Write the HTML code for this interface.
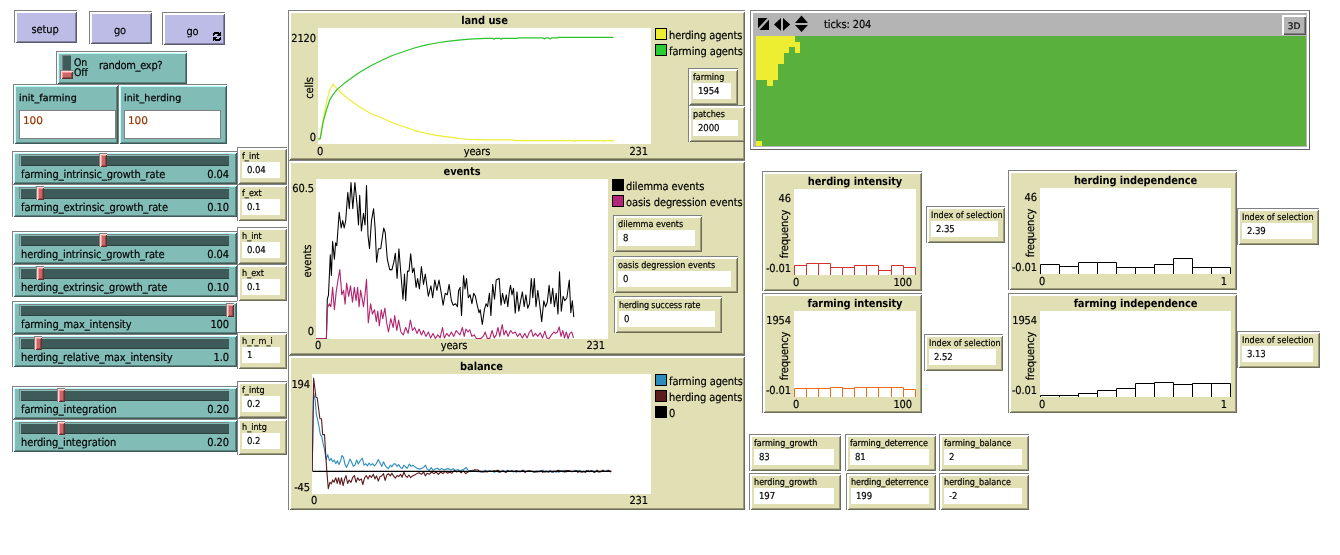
<!DOCTYPE html>
<html><head><meta charset="utf-8"><title>NetLogo interface</title><style>
html,body{margin:0;padding:0;background:#fff;}
body{width:1340px;height:555px;position:relative;overflow:hidden;-webkit-font-smoothing:antialiased;text-rendering:geometricPrecision;letter-spacing:-0.1px;-webkit-text-stroke:0.18px #000;font:11px/13px 'DejaVu Sans Condensed', 'Liberation Sans', sans-serif;color:#000;}
.w{position:absolute;box-sizing:border-box;border-top:1px solid #808080;border-left:1px solid #808080;overflow:hidden;}
.a{position:absolute;white-space:nowrap;}
#root{position:absolute;left:0;top:0;width:1340px;height:555px;will-change:transform;}
.bl{position:absolute;left:0;right:0;top:0;text-align:center;font:11px 'DejaVu Sans Condensed', 'Liberation Sans', sans-serif;}
.hd{background:#c86767;box-sizing:border-box;border-top:1px solid #808080;border-left:1px solid #808080;box-shadow:inset 1px 1px 0 #ffd6d6,inset -1px -1px 0 #643232,inset 2px 2px 0 #ff9494,inset -2px -2px 0 #8e4848;}
.trk{background:#3f5b59;box-sizing:border-box;border-top:1px solid #808080;border-left:1px solid #808080;box-shadow:inset 1px 1px 0 #82bcb7,inset 0 -1px 0 #2c403e;}
.ml{font:9px/12px 'DejaVu Sans Condensed', 'Liberation Sans', sans-serif;}
.mv{font:9.5px/12px 'DejaVu Sans Condensed', 'Liberation Sans', sans-serif;}
.pt{font:bold 11px/14px 'DejaVu Sans Condensed', 'Liberation Sans', sans-serif;text-align:center;-webkit-text-stroke:0;}
.pl{font:11px/13px 'DejaVu Sans Condensed', 'Liberation Sans', sans-serif;margin-top:-1px;}
.rot{transform:translate(-50%,-50%) rotate(-90deg);margin-top:0;}
</style></head><body>
<div id="root">
<div class="w" style="left:14px;top:10px;width:63px;height:33px;background:rgb(188,188,230);box-shadow:inset 1px 1px 0 rgb(255,255,255),inset -1px -1px 0 rgb(91,91,112),inset 2px 2px 0 rgb(255,255,255),inset -2px -2px 0 rgb(131,131,161);"><span class="bl" style="line-height:37px;padding-right:2px;">setup</span></div>
<div class="w" style="left:89px;top:11px;width:63px;height:33px;background:rgb(188,188,230);box-shadow:inset 1px 1px 0 rgb(255,255,255),inset -1px -1px 0 rgb(91,91,112),inset 2px 2px 0 rgb(255,255,255),inset -2px -2px 0 rgb(131,131,161);"><span class="bl" style="line-height:37px;padding-right:2px;">go</span></div>
<div class="w" style="left:162px;top:12px;width:63px;height:33px;background:rgb(188,188,230);box-shadow:inset 1px 1px 0 rgb(255,255,255),inset -1px -1px 0 rgb(91,91,112),inset 2px 2px 0 rgb(255,255,255),inset -2px -2px 0 rgb(131,131,161);"><span class="bl" style="line-height:37px;padding-right:3px;">go</span><svg class="a" style="left:50px;top:19px" width="8" height="9" shape-rendering="crispEdges"><rect x="1" y="0" width="5" height="1"/><rect x="7" y="0" width="1" height="1"/><rect x="0" y="1" width="8" height="1"/><rect x="0" y="2" width="2" height="1"/><rect x="5" y="2" width="3" height="1"/><rect x="0" y="3" width="1" height="1"/><rect x="4" y="3" width="4" height="1"/><rect x="0" y="5" width="4" height="1"/><rect x="7" y="5" width="1" height="1"/><rect x="0" y="6" width="3" height="1"/><rect x="6" y="6" width="2" height="1"/><rect x="0" y="7" width="8" height="1"/><rect x="0" y="8" width="1" height="1"/><rect x="2" y="8" width="5" height="1"/></svg></div>
<div class="w" style="left:56px;top:51px;width:131px;height:33px;background:rgb(130,188,183);box-shadow:inset 1px 1px 0 rgb(255,255,255),inset -1px -1px 0 rgb(63,91,89),inset 2px 2px 0 rgb(185,255,255),inset -2px -2px 0 rgb(91,131,128);"><div class="a" style="left:5px;top:3px;width:9px;height:18px;background:rgb(63,91,89);border-top:1px solid #808080;border-left:1px solid #808080;box-sizing:border-box"></div><div class="a hd" style="left:3px;top:18px;width:13px;height:9px"></div><span class="a" style="left:17px;top:6px;font:10.5px/10px 'DejaVu Sans Condensed', 'Liberation Sans', sans-serif">On</span><span class="a" style="left:17px;top:16px;font:10.5px/10px 'DejaVu Sans Condensed', 'Liberation Sans', sans-serif">Off</span><span class="a" style="left:42px;top:7px;font:11px/13px 'DejaVu Sans Condensed', 'Liberation Sans', sans-serif;letter-spacing:-0.3px">random_exp?</span></div>
<div class="w" style="left:13px;top:84px;width:105px;height:60px;background:rgb(130,188,183);box-shadow:inset 1px 1px 0 rgb(255,255,255),inset -1px -1px 0 rgb(63,91,89),inset 2px 2px 0 rgb(185,255,255),inset -2px -2px 0 rgb(91,131,128);"><span class="a" style="left:5px;top:8px;font:9.5px/12px 'DejaVu Sans', 'Liberation Sans', sans-serif;letter-spacing:0.1px;-webkit-text-stroke:0.25px #000">init_farming</span><div class="a" style="left:5px;top:25px;width:97px;height:29px;background:#fff;border:1px solid #808080;box-sizing:border-box"></div><span class="a" style="left:9px;top:30px;font:10.5px/12px 'DejaVu Sans', 'Liberation Sans', sans-serif;color:#963700;-webkit-text-stroke:0.2px #963700">100</span></div>
<div class="w" style="left:118px;top:84px;width:109px;height:60px;background:rgb(130,188,183);box-shadow:inset 1px 1px 0 rgb(255,255,255),inset -1px -1px 0 rgb(63,91,89),inset 2px 2px 0 rgb(185,255,255),inset -2px -2px 0 rgb(91,131,128);"><span class="a" style="left:5px;top:8px;font:9.5px/12px 'DejaVu Sans', 'Liberation Sans', sans-serif;letter-spacing:0.1px;-webkit-text-stroke:0.25px #000">init_herding</span><div class="a" style="left:5px;top:25px;width:97px;height:29px;background:#fff;border:1px solid #808080;box-sizing:border-box"></div><span class="a" style="left:9px;top:30px;font:10.5px/12px 'DejaVu Sans', 'Liberation Sans', sans-serif;color:#963700;-webkit-text-stroke:0.2px #963700">100</span></div>
<div class="w" style="left:12px;top:151px;width:225px;height:33px;background:rgb(130,188,183);box-shadow:inset 1px 1px 0 rgb(255,255,255),inset -1px -1px 0 rgb(63,91,89),inset 2px 2px 0 rgb(185,255,255),inset -2px -2px 0 rgb(91,131,128);"><div class="a trk" style="left:6px;top:2px;width:210px;height:12px"></div><div class="a hd" style="left:86px;top:1px;width:8px;height:14px"></div><span class="a" style="left:8px;top:16px;font:11px/13px 'DejaVu Sans Condensed', 'Liberation Sans', sans-serif">farming_intrinsic_growth_rate</span><span class="a" style="right:8px;top:16px;font:11px/13px 'DejaVu Sans Condensed', 'Liberation Sans', sans-serif">0.04</span></div>
<div class="w" style="left:12px;top:184px;width:225px;height:33px;background:rgb(130,188,183);box-shadow:inset 1px 1px 0 rgb(255,255,255),inset -1px -1px 0 rgb(63,91,89),inset 2px 2px 0 rgb(185,255,255),inset -2px -2px 0 rgb(91,131,128);"><div class="a trk" style="left:6px;top:2px;width:210px;height:12px"></div><div class="a hd" style="left:23px;top:1px;width:8px;height:14px"></div><span class="a" style="left:8px;top:16px;font:11px/13px 'DejaVu Sans Condensed', 'Liberation Sans', sans-serif">farming_extrinsic_growth_rate</span><span class="a" style="right:8px;top:16px;font:11px/13px 'DejaVu Sans Condensed', 'Liberation Sans', sans-serif">0.10</span></div>
<div class="w" style="left:12px;top:231px;width:225px;height:33px;background:rgb(130,188,183);box-shadow:inset 1px 1px 0 rgb(255,255,255),inset -1px -1px 0 rgb(63,91,89),inset 2px 2px 0 rgb(185,255,255),inset -2px -2px 0 rgb(91,131,128);"><div class="a trk" style="left:6px;top:2px;width:210px;height:12px"></div><div class="a hd" style="left:86px;top:1px;width:8px;height:14px"></div><span class="a" style="left:8px;top:16px;font:11px/13px 'DejaVu Sans Condensed', 'Liberation Sans', sans-serif">herding_intrinsic_growth_rate</span><span class="a" style="right:8px;top:16px;font:11px/13px 'DejaVu Sans Condensed', 'Liberation Sans', sans-serif">0.04</span></div>
<div class="w" style="left:12px;top:264px;width:225px;height:33px;background:rgb(130,188,183);box-shadow:inset 1px 1px 0 rgb(255,255,255),inset -1px -1px 0 rgb(63,91,89),inset 2px 2px 0 rgb(185,255,255),inset -2px -2px 0 rgb(91,131,128);"><div class="a trk" style="left:6px;top:2px;width:210px;height:12px"></div><div class="a hd" style="left:23px;top:1px;width:8px;height:14px"></div><span class="a" style="left:8px;top:16px;font:11px/13px 'DejaVu Sans Condensed', 'Liberation Sans', sans-serif">herding_extrinsic_growth_rate</span><span class="a" style="right:8px;top:16px;font:11px/13px 'DejaVu Sans Condensed', 'Liberation Sans', sans-serif">0.10</span></div>
<div class="w" style="left:12px;top:301px;width:225px;height:33px;background:rgb(130,188,183);box-shadow:inset 1px 1px 0 rgb(255,255,255),inset -1px -1px 0 rgb(63,91,89),inset 2px 2px 0 rgb(185,255,255),inset -2px -2px 0 rgb(91,131,128);"><div class="a trk" style="left:6px;top:2px;width:210px;height:12px"></div><div class="a hd" style="left:213px;top:1px;width:8px;height:14px"></div><span class="a" style="left:8px;top:16px;font:11px/13px 'DejaVu Sans Condensed', 'Liberation Sans', sans-serif">farming_max_intensity</span><span class="a" style="right:8px;top:16px;font:11px/13px 'DejaVu Sans Condensed', 'Liberation Sans', sans-serif">100</span></div>
<div class="w" style="left:12px;top:334px;width:225px;height:33px;background:rgb(130,188,183);box-shadow:inset 1px 1px 0 rgb(255,255,255),inset -1px -1px 0 rgb(63,91,89),inset 2px 2px 0 rgb(185,255,255),inset -2px -2px 0 rgb(91,131,128);"><div class="a trk" style="left:6px;top:2px;width:210px;height:12px"></div><div class="a hd" style="left:21px;top:1px;width:8px;height:14px"></div><span class="a" style="left:8px;top:16px;font:11px/13px 'DejaVu Sans Condensed', 'Liberation Sans', sans-serif">herding_relative_max_intensity</span><span class="a" style="right:8px;top:16px;font:11px/13px 'DejaVu Sans Condensed', 'Liberation Sans', sans-serif">1.0</span></div>
<div class="w" style="left:12px;top:386px;width:225px;height:33px;background:rgb(130,188,183);box-shadow:inset 1px 1px 0 rgb(255,255,255),inset -1px -1px 0 rgb(63,91,89),inset 2px 2px 0 rgb(185,255,255),inset -2px -2px 0 rgb(91,131,128);"><div class="a trk" style="left:6px;top:2px;width:210px;height:12px"></div><div class="a hd" style="left:44px;top:1px;width:8px;height:14px"></div><span class="a" style="left:8px;top:16px;font:11px/13px 'DejaVu Sans Condensed', 'Liberation Sans', sans-serif">farming_integration</span><span class="a" style="right:8px;top:16px;font:11px/13px 'DejaVu Sans Condensed', 'Liberation Sans', sans-serif">0.20</span></div>
<div class="w" style="left:12px;top:419px;width:225px;height:33px;background:rgb(130,188,183);box-shadow:inset 1px 1px 0 rgb(255,255,255),inset -1px -1px 0 rgb(63,91,89),inset 2px 2px 0 rgb(185,255,255),inset -2px -2px 0 rgb(91,131,128);"><div class="a trk" style="left:6px;top:2px;width:210px;height:12px"></div><div class="a hd" style="left:44px;top:1px;width:8px;height:14px"></div><span class="a" style="left:8px;top:16px;font:11px/13px 'DejaVu Sans Condensed', 'Liberation Sans', sans-serif">herding_integration</span><span class="a" style="right:8px;top:16px;font:11px/13px 'DejaVu Sans Condensed', 'Liberation Sans', sans-serif">0.20</span></div>
<div class="w" style="left:237px;top:147px;width:50px;height:37px;background:rgb(224,224,180);box-shadow:inset 1px 1px 0 rgb(255,255,255),inset -1px -1px 0 rgb(109,109,87),inset 2px 2px 0 rgb(255,255,255),inset -2px -2px 0 rgb(156,156,125);"><span class="a ml" style="left:4px;top:3px;letter-spacing:0px">f_int</span><div class="a" style="left:4px;top:14px;width:38px;height:16px;background:#fff"></div><span class="a mv" style="left:9px;top:17px">0.04</span></div>
<div class="w" style="left:237px;top:184px;width:50px;height:37px;background:rgb(224,224,180);box-shadow:inset 1px 1px 0 rgb(255,255,255),inset -1px -1px 0 rgb(109,109,87),inset 2px 2px 0 rgb(255,255,255),inset -2px -2px 0 rgb(156,156,125);"><span class="a ml" style="left:4px;top:3px;letter-spacing:0px">f_ext</span><div class="a" style="left:4px;top:14px;width:38px;height:16px;background:#fff"></div><span class="a mv" style="left:9px;top:17px">0.1</span></div>
<div class="w" style="left:237px;top:227px;width:50px;height:37px;background:rgb(224,224,180);box-shadow:inset 1px 1px 0 rgb(255,255,255),inset -1px -1px 0 rgb(109,109,87),inset 2px 2px 0 rgb(255,255,255),inset -2px -2px 0 rgb(156,156,125);"><span class="a ml" style="left:4px;top:3px;letter-spacing:0px">h_int</span><div class="a" style="left:4px;top:14px;width:38px;height:16px;background:#fff"></div><span class="a mv" style="left:9px;top:17px">0.04</span></div>
<div class="w" style="left:237px;top:264px;width:50px;height:37px;background:rgb(224,224,180);box-shadow:inset 1px 1px 0 rgb(255,255,255),inset -1px -1px 0 rgb(109,109,87),inset 2px 2px 0 rgb(255,255,255),inset -2px -2px 0 rgb(156,156,125);"><span class="a ml" style="left:4px;top:3px;letter-spacing:0px">h_ext</span><div class="a" style="left:4px;top:14px;width:38px;height:16px;background:#fff"></div><span class="a mv" style="left:9px;top:17px">0.1</span></div>
<div class="w" style="left:237px;top:332px;width:50px;height:37px;background:rgb(224,224,180);box-shadow:inset 1px 1px 0 rgb(255,255,255),inset -1px -1px 0 rgb(109,109,87),inset 2px 2px 0 rgb(255,255,255),inset -2px -2px 0 rgb(156,156,125);"><span class="a ml" style="left:4px;top:3px;letter-spacing:0px">h_r_m_i</span><div class="a" style="left:4px;top:14px;width:38px;height:16px;background:#fff"></div><span class="a mv" style="left:9px;top:17px">1</span></div>
<div class="w" style="left:237px;top:381px;width:50px;height:37px;background:rgb(224,224,180);box-shadow:inset 1px 1px 0 rgb(255,255,255),inset -1px -1px 0 rgb(109,109,87),inset 2px 2px 0 rgb(255,255,255),inset -2px -2px 0 rgb(156,156,125);"><span class="a ml" style="left:4px;top:3px;letter-spacing:0px">f_intg</span><div class="a" style="left:4px;top:14px;width:38px;height:16px;background:#fff"></div><span class="a mv" style="left:9px;top:17px">0.2</span></div>
<div class="w" style="left:237px;top:418px;width:50px;height:37px;background:rgb(224,224,180);box-shadow:inset 1px 1px 0 rgb(255,255,255),inset -1px -1px 0 rgb(109,109,87),inset 2px 2px 0 rgb(255,255,255),inset -2px -2px 0 rgb(156,156,125);"><span class="a ml" style="left:4px;top:3px;letter-spacing:0px">h_intg</span><div class="a" style="left:4px;top:14px;width:38px;height:16px;background:#fff"></div><span class="a mv" style="left:9px;top:17px">0.2</span></div>
<div class="w" style="left:288px;top:10px;width:457px;height:150px;background:rgb(224,224,180);box-shadow:inset 1px 1px 0 rgb(255,255,255),inset -1px -1px 0 rgb(109,109,87),inset 2px 2px 0 rgb(255,255,255),inset -2px -2px 0 rgb(156,156,125);"><span class="a pt" style="left:29px;top:3px;width:333px">land use</span><div class="a" style="left:29px;top:17px;width:333px;height:116px;background:#fff"><svg class="a" style="left:0;top:0" width="333" height="116" viewBox="0 0 333 116"><polyline fill="none" stroke="#eded31" stroke-width="1.2" stroke-linejoin="round" points="0.4,111.1 2.2,110.6 5.1,91.9 8.4,74.3 11.7,62.2 15.0,56.3 19.4,61.1 23.8,65.5 30.3,71.0 41.3,78.7 52.3,85.3 63.3,89.7 74.3,94.8 85.3,98.5 96.3,102.3 107.3,105.1 118.3,107.3 129.3,108.9 140.3,110.4 151.3,111.5 162.3,111.7 167.4,111.9 168.8,111.8 170.2,111.8 171.7,111.8 173.1,111.8 174.6,111.8 176.0,111.8 177.4,111.8 178.9,111.8 180.3,111.8 181.8,111.8 183.2,111.8 184.6,111.8 186.1,111.8 187.5,111.8 189.0,111.8 190.4,111.8 191.8,111.8 193.3,111.8 194.7,111.8 196.2,112.6 197.6,112.6 199.0,112.6 200.5,112.6 201.9,112.6 203.4,112.6 204.8,112.6 206.2,112.6 207.7,112.6 209.1,112.6 210.6,112.6 212.0,112.6 213.4,112.6 214.9,112.6 216.3,112.6 217.8,112.6 219.2,112.6 220.6,112.6 222.1,112.6 223.5,112.6 225.0,112.6 226.4,112.6 227.8,112.6 229.3,112.6 230.7,112.6 232.2,112.6 233.6,112.6 235.0,112.6 236.5,112.6 237.9,112.6 239.4,112.6 240.8,112.6 242.2,112.6 243.7,112.6 245.1,112.6 246.6,112.6 248.0,112.6 249.4,112.6 250.9,112.6 252.3,112.6 253.8,112.6 255.2,112.6 256.6,113.6 258.1,112.6 259.5,112.6 261.0,112.6 262.4,112.6 263.8,112.6 265.3,112.6 266.7,112.6 268.2,112.6 269.6,112.6 271.0,112.6 272.5,112.6 273.9,112.6 275.4,112.6 276.8,112.6 278.2,112.6 279.7,112.6 281.1,112.6 282.6,112.6 284.0,112.6 285.4,113.6 286.9,112.6 288.3,112.6 289.8,112.6 291.2,112.6 292.6,112.6 294.1,113.6 295.5,112.6 295.6,112.6"/><polyline fill="none" stroke="#2cc42c" stroke-width="1.2" stroke-linejoin="round" points="0.4,111.1 2.2,110.6 5.1,94.1 8.4,82.0 11.7,72.1 15.0,66.6 19.4,61.1 26.0,55.6 30.3,52.3 41.3,44.6 52.3,38.0 63.3,32.5 74.3,27.5 85.3,23.8 96.3,20.0 107.3,17.2 118.3,15.0 129.3,13.4 140.3,12.1 151.3,11.2 162.3,10.6 167.4,10.3 168.8,10.3 170.2,10.3 171.7,10.3 173.1,10.3 174.6,10.3 176.0,11.3 177.4,10.3 178.9,10.3 180.3,10.3 181.8,10.3 183.2,11.3 184.6,10.3 186.1,10.3 187.5,10.3 189.0,10.3 190.4,10.3 191.8,10.3 193.3,10.3 194.7,10.3 196.2,10.3 197.6,10.3 199.0,10.3 200.5,9.9 201.9,9.9 203.4,9.9 204.8,9.9 206.2,9.9 207.7,9.9 209.1,9.9 210.6,9.9 212.0,9.9 213.4,9.9 214.9,9.9 216.3,9.9 217.8,9.9 219.2,9.9 220.6,9.9 222.1,9.9 223.5,9.9 225.0,9.9 226.4,10.9 227.8,9.9 229.3,9.9 230.7,9.9 232.2,10.9 233.6,9.9 235.0,9.9 236.5,9.9 237.9,9.9 239.4,9.9 240.8,9.4 242.2,9.4 243.7,9.4 245.1,9.4 246.6,9.4 248.0,9.4 249.4,9.4 250.9,9.4 252.3,9.4 253.8,9.4 255.2,9.4 256.6,9.4 258.1,9.4 259.5,9.4 261.0,9.4 262.4,9.4 263.8,9.4 265.3,9.4 266.7,9.4 268.2,9.4 269.6,9.4 271.0,9.4 272.5,9.4 273.9,9.4 275.4,9.4 276.8,9.4 278.2,9.4 279.7,9.4 281.1,9.4 282.6,9.4 284.0,9.4 285.4,9.4 286.9,9.4 288.3,9.4 289.8,9.4 291.2,9.4 292.6,9.4 294.1,9.4 295.5,9.4 295.6,9.4"/></svg></div><span class="a pl" style="right:429px;top:22px">2120</span><span class="a pl" style="right:429px;top:121px">0</span><span class="a pl" style="left:28px;top:135px">0</span><span class="a pl" style="right:97px;top:135px">231</span><span class="a pl" style="left:138px;top:135px;width:100px;text-align:center">years</span><span class="a pl rot" style="left:20px;top:77px;">cells</span><div class="a" style="left:366px;top:17px;width:12px;height:12px;background:#eded31;border:1px solid #000;box-sizing:border-box"></div><span class="a pl" style="left:380px;top:19px;letter-spacing:-0.1px">herding agents</span><div class="a" style="left:366px;top:33px;width:12px;height:12px;background:#2ccc38;border:1px solid #000;box-sizing:border-box"></div><span class="a pl" style="left:380px;top:35px;letter-spacing:-0.1px">farming agents</span></div>
<div class="w" style="left:688px;top:68px;width:50px;height:37px;background:rgb(224,224,180);box-shadow:inset 1px 1px 0 rgb(255,255,255),inset -1px -1px 0 rgb(109,109,87),inset 2px 2px 0 rgb(255,255,255),inset -2px -2px 0 rgb(156,156,125);"><span class="a ml" style="left:4px;top:3px;letter-spacing:0px">farming</span><div class="a" style="left:4px;top:14px;width:38px;height:16px;background:#fff"></div><span class="a mv" style="left:9px;top:17px">1954</span></div>
<div class="w" style="left:688px;top:105px;width:57px;height:37px;background:rgb(224,224,180);box-shadow:inset 1px 1px 0 rgb(255,255,255),inset -1px -1px 0 rgb(109,109,87),inset 2px 2px 0 rgb(255,255,255),inset -2px -2px 0 rgb(156,156,125);"><span class="a ml" style="left:4px;top:3px;letter-spacing:0px">patches</span><div class="a" style="left:4px;top:14px;width:45px;height:16px;background:#fff"></div><span class="a mv" style="left:9px;top:17px">2000</span></div>
<div class="w" style="left:288px;top:160px;width:457px;height:195px;background:rgb(224,224,180);box-shadow:inset 1px 1px 0 rgb(255,255,255),inset -1px -1px 0 rgb(109,109,87),inset 2px 2px 0 rgb(255,255,255),inset -2px -2px 0 rgb(156,156,125);"><span class="a pt" style="left:27px;top:4px;width:292px">events</span><div class="a" style="left:27px;top:18px;width:292px;height:160px;background:#fff"><svg class="a" style="left:0;top:0" width="292" height="160" viewBox="0 0 292 160"><polyline fill="none" stroke="#000" stroke-width="1.05" stroke-linejoin="round" points="0.0,159.5 10.4,159.5 11.3,120.3 12.5,115.8 14.3,75.7 15.4,96.5 16.6,62.4 18.4,80.2 19.6,63.9 20.8,66.8 23.2,33.3 25.2,49.0 26.7,41.6 28.2,49.0 29.7,41.6 31.8,13.4 33.3,29.7 35.0,3.6 36.8,29.7 38.9,3.6 41.0,25.2 42.5,46.0 43.7,16.3 45.4,52.0 47.5,34.2 49.0,46.0 50.5,6.5 52.0,56.4 53.5,69.8 55.5,41.6 57.6,29.7 59.1,49.0 60.6,83.2 62.4,69.8 64.7,69.8 67.7,49.0 69.2,53.5 71.3,80.2 73.7,90.6 76.0,90.6 77.8,83.2 79.3,74.3 81.1,99.5 82.9,69.8 84.9,95.0 87.0,120.3 88.5,95.0 89.7,121.8 91.5,92.1 93.0,92.1 94.7,74.8 96.5,93.6 98.0,89.1 100.1,108.4 101.6,99.5 103.4,109.9 105.4,87.6 107.5,105.4 109.3,95.0 112.3,117.3 114.9,106.9 116.7,118.8 118.8,101.0 120.9,111.4 123.0,101.0 125.3,114.3 127.1,126.2 129.2,114.3 131.3,115.8 133.1,105.4 135.4,121.8 137.2,126.2 139.6,124.7 141.4,127.7 142.6,111.4 144.3,108.4 144.0,108.4 145.5,136.6 147.6,96.5 149.0,109.9 150.5,99.5 152.3,118.8 154.1,115.8 155.9,124.7 157.7,114.3 159.4,117.3 161.2,126.2 163.0,133.7 164.2,130.7 166.3,145.5 168.4,130.7 170.1,124.7 171.6,127.7 173.4,114.3 174.9,136.6 176.7,105.4 178.5,120.3 180.2,101.0 183.2,99.5 185.0,126.2 186.5,114.3 188.6,124.7 190.3,115.8 191.8,127.7 193.3,112.9 194.5,106.3 196.0,115.8 197.5,109.3 199.2,134.2 201.0,112.9 202.8,132.2 204.6,121.8 206.4,112.9 208.2,127.7 209.9,115.8 211.7,129.2 213.5,124.7 215.3,99.5 216.8,118.8 218.3,99.5 220.0,127.7 221.8,111.4 223.6,124.7 225.7,142.6 227.8,121.8 229.5,127.7 231.3,123.3 233.1,106.3 234.9,124.7 236.7,109.3 238.4,127.7 240.2,114.3 242.0,135.1 243.5,92.7 245.3,132.2 247.1,117.3 248.8,121.8 250.9,118.8 253.3,101.0 254.8,133.7 256.3,121.8 257.8,138.1"/><polyline fill="none" stroke="#b0246e" stroke-width="1.1" stroke-linejoin="round" points="0.0,159.5 10.4,159.5 11.3,129.2 13.4,124.7 14.9,127.7 16.6,108.4 18.4,130.7 20.2,112.9 22.0,101.0 23.8,90.6 25.8,115.8 27.6,111.4 29.1,125.3 30.6,104.0 32.7,117.3 34.5,106.9 36.5,123.3 38.3,108.4 40.1,121.8 41.6,108.4 43.1,127.7 44.6,111.4 46.0,118.8 47.5,127.7 49.0,115.8 50.5,100.4 52.3,144.0 54.6,124.7 56.4,135.1 58.5,130.7 60.3,142.6 61.8,132.2 63.3,147.0 65.3,130.7 66.8,139.6 68.9,129.2 70.7,144.0 72.5,153.0 74.8,139.6 77.2,148.5 78.7,136.6 80.8,151.5 82.6,141.1 84.9,153.0 87.3,155.9 89.7,148.5 92.1,154.4 94.4,141.1 96.5,151.5 98.6,148.5 101.0,154.4 103.1,150.0 105.4,155.9 107.5,151.5 109.9,157.4 112.3,153.0 114.6,158.9 117.0,154.4 119.4,159.5 121.8,155.9 124.1,158.9 126.5,148.5 128.3,158.9 130.7,154.4 133.1,157.4 135.4,153.0 137.8,157.4 140.2,151.5 142.6,154.4 144.0,155.9 146.4,148.5 148.2,157.4 149.9,150.0 152.0,153.0 153.8,150.9 155.9,157.4 158.3,155.9 160.3,159.5 164.8,159.5 167.2,157.4 169.2,153.0 171.3,159.5 173.7,159.5 176.1,151.5 178.2,158.9 180.2,155.9 182.0,148.5 183.8,157.4 186.2,145.5 188.0,155.9 190.0,151.5 192.1,157.4 194.5,151.5 196.9,154.4 199.2,153.0 201.6,157.4 204.0,154.4 206.4,158.9 208.7,154.4 211.1,158.9 213.5,153.0 215.3,150.9 217.1,157.4 219.4,154.4 221.8,157.4 224.2,153.8 226.6,158.9 228.9,152.1 230.7,158.9 233.1,159.5 235.5,155.9 237.9,153.0 239.6,154.4 241.4,153.0 243.2,147.9 245.0,157.4 246.8,151.5 248.5,158.9 250.3,153.0 252.1,159.5 253.9,154.4 255.7,153.0 257.5,158.9"/></svg></div><span class="a pl" style="right:431px;top:22px">60.5</span><span class="a pl" style="right:431px;top:165px">0</span><span class="a pl" style="left:26px;top:179px">0</span><span class="a pl" style="right:140px;top:179px">231</span><span class="a pl" style="left:115px;top:179px;width:100px;text-align:center">years</span><span class="a pl rot" style="left:18px;top:100px;">events</span><div class="a" style="left:323px;top:18px;width:12px;height:12px;background:#000;border:1px solid #000;box-sizing:border-box"></div><span class="a pl" style="left:337px;top:20px;letter-spacing:-0.1px">dilemma events</span><div class="a" style="left:323px;top:34px;width:12px;height:12px;background:#b4257a;border:1px solid #000;box-sizing:border-box"></div><span class="a pl" style="left:337px;top:36px;letter-spacing:-0.1px">oasis degression events</span></div>
<div class="w" style="left:613px;top:215px;width:89px;height:37px;background:rgb(224,224,180);box-shadow:inset 1px 1px 0 rgb(255,255,255),inset -1px -1px 0 rgb(109,109,87),inset 2px 2px 0 rgb(255,255,255),inset -2px -2px 0 rgb(156,156,125);"><span class="a ml" style="left:4px;top:3px;letter-spacing:0px">dilemma events</span><div class="a" style="left:4px;top:14px;width:77px;height:16px;background:#fff"></div><span class="a mv" style="left:9px;top:17px">8</span></div>
<div class="w" style="left:613px;top:256px;width:125px;height:37px;background:rgb(224,224,180);box-shadow:inset 1px 1px 0 rgb(255,255,255),inset -1px -1px 0 rgb(109,109,87),inset 2px 2px 0 rgb(255,255,255),inset -2px -2px 0 rgb(156,156,125);"><span class="a ml" style="left:4px;top:3px;letter-spacing:0px">oasis degression events</span><div class="a" style="left:4px;top:14px;width:113px;height:16px;background:#fff"></div><span class="a mv" style="left:9px;top:17px">0</span></div>
<div class="w" style="left:614px;top:296px;width:108px;height:37px;background:rgb(224,224,180);box-shadow:inset 1px 1px 0 rgb(255,255,255),inset -1px -1px 0 rgb(109,109,87),inset 2px 2px 0 rgb(255,255,255),inset -2px -2px 0 rgb(156,156,125);"><span class="a ml" style="left:4px;top:3px;letter-spacing:-0.15px">herding success rate</span><div class="a" style="left:4px;top:14px;width:96px;height:16px;background:#fff"></div><span class="a mv" style="left:9px;top:17px">0</span></div>
<div class="w" style="left:288px;top:355px;width:457px;height:155px;background:rgb(224,224,180);box-shadow:inset 1px 1px 0 rgb(255,255,255),inset -1px -1px 0 rgb(109,109,87),inset 2px 2px 0 rgb(255,255,255),inset -2px -2px 0 rgb(156,156,125);"><span class="a pt" style="left:23px;top:4px;width:339px">balance</span><div class="a" style="left:23px;top:18px;width:339px;height:120px;background:#fff"><svg class="a" style="left:0;top:0" width="339" height="120" viewBox="0 0 339 120"><polyline fill="none" stroke="#2d8cbe" stroke-width="1.1" stroke-linejoin="round" points="0.2,97.1 1.6,18.6 3.2,26.6 4.3,40.2 5.7,45.8 7.0,52.7 8.4,60.6 9.8,62.9 11.1,69.7 12.5,75.4 14.1,85.6 15.7,80.6 17.5,86.7 19.1,84.4 20.7,87.8 22.2,86.0 23.8,89.7 25.4,86.7 27.0,90.6 28.6,86.7 30.0,81.5 31.5,83.3 32.9,90.1 34.5,93.5 36.1,90.1 37.9,85.1 39.5,87.8 41.3,92.4 42.9,91.2 44.7,86.0 46.3,90.1 48.1,86.7 50.4,84.4 52.0,91.2 53.8,89.7 55.4,91.9 57.2,89.0 58.8,91.2 60.6,89.7 62.4,91.9 64.0,90.1 66.3,85.6 68.1,89.0 69.7,92.4 71.5,87.8 73.1,91.2 74.9,93.5 76.5,94.6 78.3,91.2 79.9,92.8 81.5,90.1 83.3,89.7 85.1,92.4 86.7,90.6 88.5,93.5 90.1,94.6 91.9,91.2 93.5,92.8 95.3,94.2 97.4,90.1 99.2,92.4 101.0,91.2 102.8,92.8 104.9,94.2 107.1,95.1 109.4,94.6 111.7,93.5 113.5,91.2 115.1,95.1 117.3,96.5 119.2,93.5 121.0,96.5 123.0,95.1 125.3,94.2 127.6,95.8 129.8,94.6 132.1,96.0 134.4,95.1 136.6,94.6 138.9,96.0 141.2,94.6 143.4,96.5 145.7,95.6 148.0,96.9 150.2,96.0 152.5,95.1 154.3,93.5 155.9,96.0 158.2,96.9 160.5,96.0 162.7,96.9 166.1,97.8 167.6,97.4 169.1,98.2 170.5,97.4 172.0,97.4 173.5,96.2 174.9,97.4 176.4,97.1 177.9,96.8 179.3,97.4 180.8,97.4 182.3,98.2 183.7,97.4 185.2,97.4 186.7,98.2 188.1,97.4 189.6,97.4 191.1,96.2 192.6,97.4 194.0,98.4 195.5,96.2 197.0,97.4 198.4,97.1 199.9,96.2 201.4,97.4 202.8,97.4 204.3,98.2 205.8,97.4 207.2,97.1 208.7,97.4 210.2,96.2 211.6,97.4 213.1,98.4 214.6,97.1 216.0,96.8 217.5,97.4 219.0,97.4 220.4,97.4 221.9,98.2 223.4,98.2 224.8,97.1 226.3,97.4 227.8,97.1 229.2,97.4 230.7,96.2 232.2,98.2 233.6,97.1 235.1,97.4 236.6,98.2 238.0,96.2 239.5,98.4 241.0,97.1 242.4,97.4 243.9,98.2 245.4,97.4 246.8,98.4 248.3,96.8 249.8,96.8 251.3,96.8 252.7,96.2 254.2,98.2 255.7,96.8 257.1,97.1 258.6,97.4 260.1,97.4 261.5,97.4 263.0,96.2 264.5,97.1 265.9,97.1 267.4,96.2 268.9,97.4 270.3,98.2 271.8,97.4 273.3,98.2 274.7,97.4 276.2,96.2 277.7,97.4 279.1,97.4 280.6,96.8 282.1,98.4 283.5,97.4 285.0,96.8 286.5,98.4 287.9,97.4 289.4,97.4 290.9,96.2 292.3,97.4 293.8,97.4 295.3,96.2 296.7,96.8 298.2,97.4 299.0,98.4"/><polyline fill="none" stroke="#5a1a1a" stroke-width="1.1" stroke-linejoin="round" points="0.2,97.1 1.6,4.3 3.0,15.2 3.9,23.2 5.2,23.8 6.6,34.5 7.9,44.7 9.5,44.7 10.7,60.6 12.5,60.6 13.4,75.4 14.8,96.9 16.3,114.6 17.9,108.3 19.3,109.9 20.7,106.0 22.0,108.3 23.8,103.7 25.2,109.4 26.6,103.7 28.1,110.5 29.5,103.7 31.1,111.7 32.7,104.9 34.0,101.5 35.6,109.4 37.2,106.0 39.0,108.3 40.6,103.7 42.4,101.5 44.0,108.3 45.8,103.7 47.4,106.4 49.3,104.9 50.8,110.5 52.7,103.7 54.2,101.5 56.1,104.9 57.6,101.5 59.5,103.3 61.3,100.3 62.9,104.9 64.5,101.9 66.3,107.1 67.9,102.6 69.7,101.9 71.5,99.6 73.1,106.4 74.9,101.0 76.5,99.6 78.3,101.9 79.9,99.2 81.5,101.9 83.3,104.2 85.1,101.5 86.7,102.6 88.5,100.3 90.1,103.3 91.9,98.0 93.5,101.9 95.3,103.3 96.9,101.0 98.7,103.7 100.5,101.9 102.6,101.0 104.9,99.6 107.1,98.7 109.4,100.3 111.7,98.0 113.3,101.9 115.1,99.2 117.3,100.3 119.6,98.0 121.9,99.6 124.1,98.0 126.4,100.3 128.7,98.0 131.0,99.6 133.2,97.4 135.5,99.2 137.8,98.0 140.0,99.2 142.3,96.5 144.6,98.0 146.8,96.9 149.1,98.7 151.4,96.9 153.7,99.6 155.9,98.0 158.2,96.9 160.5,97.4 162.7,95.8 166.1,96.0 167.6,97.4 169.1,97.4 170.5,98.0 172.0,98.0 173.5,97.4 174.9,98.0 176.4,97.4 177.9,97.4 179.3,97.4 180.8,97.4 182.3,96.6 183.7,97.4 185.2,96.2 186.7,96.6 188.1,98.4 189.6,97.4 191.1,97.4 192.6,97.7 194.0,98.4 195.5,96.6 197.0,97.4 198.4,97.4 199.9,97.4 201.4,97.7 202.8,97.4 204.3,96.6 205.8,97.4 207.2,97.7 208.7,97.7 210.2,96.6 211.6,96.2 213.1,98.4 214.6,97.4 216.0,97.4 217.5,96.6 219.0,97.4 220.4,97.4 221.9,98.0 223.4,97.4 224.8,98.0 226.3,97.7 227.8,97.7 229.2,96.6 230.7,98.4 232.2,97.4 233.6,98.0 235.1,97.4 236.6,98.0 238.0,97.4 239.5,97.4 241.0,98.4 242.4,97.4 243.9,97.4 245.4,96.6 246.8,96.2 248.3,97.4 249.8,97.4 251.3,97.7 252.7,98.0 254.2,96.6 255.7,96.6 257.1,96.6 258.6,97.4 260.1,97.7 261.5,97.4 263.0,97.4 264.5,96.6 265.9,98.4 267.4,97.4 268.9,98.0 270.3,98.0 271.8,97.4 273.3,98.4 274.7,96.6 276.2,97.4 277.7,97.7 279.1,96.6 280.6,97.4 282.1,98.4 283.5,98.0 285.0,96.2 286.5,97.4 287.9,98.0 289.4,97.4 290.9,96.2 292.3,97.4 293.8,97.4 295.3,97.4 296.7,96.2 298.2,97.4 299.0,97.4"/><polyline fill="none" stroke="#000" stroke-width="1.1" stroke-linejoin="round" points="0.5,97.4 299.4,97.4"/></svg></div><span class="a pl" style="right:435px;top:23px">194</span><span class="a pl" style="right:435px;top:126px">-45</span><span class="a pl" style="left:22px;top:139px">0</span><span class="a pl" style="right:97px;top:139px">231</span><div class="a" style="left:366px;top:18px;width:12px;height:12px;background:#2d8cbe;border:1px solid #000;box-sizing:border-box"></div><span class="a pl" style="left:380px;top:20px;letter-spacing:-0.1px">farming agents</span><div class="a" style="left:366px;top:34px;width:12px;height:12px;background:#5e1d1d;border:1px solid #000;box-sizing:border-box"></div><span class="a pl" style="left:380px;top:36px;letter-spacing:-0.1px">herding agents</span><div class="a" style="left:366px;top:50px;width:12px;height:12px;background:#000;border:1px solid #000;box-sizing:border-box"></div><span class="a pl" style="left:380px;top:52px;letter-spacing:-0.1px">0</span></div>
<div class="a" style="left:750px;top:10px;width:560px;height:140px"><div class="a" style="left:0;top:0;width:560px;height:140px;border:1px solid #808080;border-right-color:#606060;border-bottom-color:#606060;box-sizing:border-box;background:#fff"></div><div class="a" style="left:3px;top:3px;width:554px;height:134px;background:#b4b4b4"></div><svg class="a" style="left:6px;top:26px;background:#59b03c" width="550" height="110" shape-rendering="crispEdges"><g fill="#eded31"><rect x="0" y="0" width="6" height="6"/><rect x="6" y="0" width="5" height="6"/><rect x="11" y="0" width="6" height="6"/><rect x="17" y="0" width="5" height="6"/><rect x="22" y="0" width="6" height="6"/><rect x="28" y="0" width="5" height="6"/><rect x="33" y="0" width="6" height="6"/><rect x="0" y="6" width="6" height="5"/><rect x="6" y="6" width="5" height="5"/><rect x="11" y="6" width="6" height="5"/><rect x="17" y="6" width="5" height="5"/><rect x="22" y="6" width="6" height="5"/><rect x="28" y="6" width="5" height="5"/><rect x="33" y="6" width="6" height="5"/><rect x="39" y="6" width="5" height="5"/><rect x="0" y="11" width="6" height="6"/><rect x="6" y="11" width="5" height="6"/><rect x="11" y="11" width="6" height="6"/><rect x="17" y="11" width="5" height="6"/><rect x="22" y="11" width="6" height="6"/><rect x="28" y="11" width="5" height="6"/><rect x="39" y="11" width="5" height="6"/><rect x="0" y="17" width="6" height="5"/><rect x="6" y="17" width="5" height="5"/><rect x="11" y="17" width="6" height="5"/><rect x="17" y="17" width="5" height="5"/><rect x="22" y="17" width="6" height="5"/><rect x="0" y="22" width="6" height="6"/><rect x="6" y="22" width="5" height="6"/><rect x="11" y="22" width="6" height="6"/><rect x="17" y="22" width="5" height="6"/><rect x="22" y="22" width="6" height="6"/><rect x="0" y="28" width="6" height="5"/><rect x="6" y="28" width="5" height="5"/><rect x="11" y="28" width="6" height="5"/><rect x="17" y="28" width="5" height="5"/><rect x="0" y="33" width="6" height="6"/><rect x="6" y="33" width="5" height="6"/><rect x="11" y="33" width="6" height="6"/><rect x="17" y="33" width="5" height="6"/><rect x="0" y="39" width="6" height="5"/><rect x="6" y="39" width="5" height="5"/><rect x="11" y="39" width="6" height="5"/><rect x="17" y="39" width="5" height="5"/><rect x="11" y="44" width="6" height="6"/><rect x="0" y="105" width="6" height="5"/></g></svg><svg class="a" style="left:6px;top:4px" width="60" height="20"><rect x="2" y="4" width="11" height="12" fill="#000"/><path d="M2.2 15.8 L13 4" stroke="#b4b4b4" stroke-width="2.3"/><path d="M18 10.5 L25 4 L25 17 Z M34.2 10.5 L27 4 L27 17 Z" fill="#000"/><path d="M45.5 1.5 L52 9 L39 9 Z M45.5 18 L52 11 L39 11 Z" fill="#000"/></svg><span class="a" style="left:74px;top:8px;font:11px/13px 'DejaVu Sans Condensed', 'Liberation Sans', sans-serif">ticks: 204</span><div class="a" style="left:532px;top:5px;width:24px;height:20px;background:#b4b4b4;box-sizing:border-box;box-shadow:inset 2px 2px 0 #fff,inset -1px -1px 0 #555,inset -2px -2px 0 #808080;font:9px/24px 'DejaVu Sans', 'Liberation Sans', sans-serif;text-align:center;padding-left:0px">3D</div></div>
<div class="w" style="left:762px;top:171px;width:160px;height:120px;background:rgb(224,224,180);box-shadow:inset 1px 1px 0 rgb(255,255,255),inset -1px -1px 0 rgb(109,109,87),inset 2px 2px 0 rgb(255,255,255),inset -2px -2px 0 rgb(156,156,125);"><span class="a pt" style="left:31px;top:3px;width:122px">herding intensity</span><div class="a" style="left:31px;top:17px;width:122px;height:86px;background:#fff"><svg class="a" style="left:0;top:0" width="122" height="86" viewBox="0 0 122 86"><path d="M0.5 86 L0.5 76.5 L12.5 76.5 L12.5 86" fill="none" stroke="#d7322a" stroke-width="1"/><path d="M12.5 86 L12.5 74.5 L24.5 74.5 L24.5 86" fill="none" stroke="#d7322a" stroke-width="1"/><path d="M24.5 86 L24.5 74.5 L36.5 74.5 L36.5 86" fill="none" stroke="#d7322a" stroke-width="1"/><path d="M36.5 86 L36.5 78.5 L48.5 78.5 L48.5 86" fill="none" stroke="#d7322a" stroke-width="1"/><path d="M48.5 86 L48.5 78.5 L60.5 78.5 L60.5 86" fill="none" stroke="#d7322a" stroke-width="1"/><path d="M60.5 86 L60.5 76.5 L72.5 76.5 L72.5 86" fill="none" stroke="#d7322a" stroke-width="1"/><path d="M72.5 86 L72.5 76.5 L84.5 76.5 L84.5 86" fill="none" stroke="#d7322a" stroke-width="1"/><path d="M84.5 86 L84.5 81.5 L97.5 81.5 L97.5 86" fill="none" stroke="#d7322a" stroke-width="1"/><path d="M97.5 86 L97.5 76.5 L109.5 76.5 L109.5 86" fill="none" stroke="#d7322a" stroke-width="1"/><path d="M109.5 86 L109.5 78.5 L121.5 78.5 L121.5 86" fill="none" stroke="#d7322a" stroke-width="1"/></svg></div><span class="a pl" style="right:131px;top:21px">46</span><span class="a pl" style="right:131px;top:91px">-0.01</span><span class="a pl" style="left:30px;top:105px">0</span><span class="a pl" style="right:10px;top:105px">100</span><span class="a pl rot" style="left:21px;top:62px;">frequency</span></div>
<div class="w" style="left:762px;top:293px;width:160px;height:120px;background:rgb(224,224,180);box-shadow:inset 1px 1px 0 rgb(255,255,255),inset -1px -1px 0 rgb(109,109,87),inset 2px 2px 0 rgb(255,255,255),inset -2px -2px 0 rgb(156,156,125);"><span class="a pt" style="left:31px;top:3px;width:122px">farming intensity</span><div class="a" style="left:31px;top:17px;width:122px;height:86px;background:#fff"><svg class="a" style="left:0;top:0" width="122" height="86" viewBox="0 0 122 86"><path d="M0.5 86 L0.5 77.5 L12.5 77.5 L12.5 86" fill="none" stroke="#f16a15" stroke-width="1"/><path d="M12.5 86 L12.5 77.5 L24.5 77.5 L24.5 86" fill="none" stroke="#f16a15" stroke-width="1"/><path d="M24.5 86 L24.5 77.5 L36.5 77.5 L36.5 86" fill="none" stroke="#f16a15" stroke-width="1"/><path d="M36.5 86 L36.5 76.5 L48.5 76.5 L48.5 86" fill="none" stroke="#f16a15" stroke-width="1"/><path d="M48.5 86 L48.5 77.5 L60.5 77.5 L60.5 86" fill="none" stroke="#f16a15" stroke-width="1"/><path d="M60.5 86 L60.5 76.5 L72.5 76.5 L72.5 86" fill="none" stroke="#f16a15" stroke-width="1"/><path d="M72.5 86 L72.5 76.5 L84.5 76.5 L84.5 86" fill="none" stroke="#f16a15" stroke-width="1"/><path d="M84.5 86 L84.5 76.5 L97.5 76.5 L97.5 86" fill="none" stroke="#f16a15" stroke-width="1"/><path d="M97.5 86 L97.5 76.5 L109.5 76.5 L109.5 86" fill="none" stroke="#f16a15" stroke-width="1"/><path d="M109.5 86 L109.5 78.5 L121.5 78.5 L121.5 86" fill="none" stroke="#f16a15" stroke-width="1"/></svg></div><span class="a pl" style="right:131px;top:21px">1954</span><span class="a pl" style="right:131px;top:91px">-0.01</span><span class="a pl" style="left:30px;top:105px">0</span><span class="a pl" style="right:10px;top:105px">100</span><span class="a pl rot" style="left:21px;top:62px;">frequency</span></div>
<div class="w" style="left:1008px;top:170px;width:229px;height:120px;background:rgb(224,224,180);box-shadow:inset 1px 1px 0 rgb(255,255,255),inset -1px -1px 0 rgb(109,109,87),inset 2px 2px 0 rgb(255,255,255),inset -2px -2px 0 rgb(156,156,125);"><span class="a pt" style="left:31px;top:3px;width:191px">herding independence</span><div class="a" style="left:31px;top:17px;width:191px;height:86px;background:#fff"><svg class="a" style="left:0;top:0" width="191" height="86" viewBox="0 0 191 86"><path d="M0.5 86 L0.5 76.5 L19.5 76.5 L19.5 86" fill="none" stroke="#000" stroke-width="1"/><path d="M19.5 86 L19.5 78.5 L38.5 78.5 L38.5 86" fill="none" stroke="#000" stroke-width="1"/><path d="M38.5 86 L38.5 74.5 L57.5 74.5 L57.5 86" fill="none" stroke="#000" stroke-width="1"/><path d="M57.5 86 L57.5 74.5 L76.5 74.5 L76.5 86" fill="none" stroke="#000" stroke-width="1"/><path d="M76.5 86 L76.5 79.5 L95.5 79.5 L95.5 86" fill="none" stroke="#000" stroke-width="1"/><path d="M95.5 86 L95.5 79.5 L114.5 79.5 L114.5 86" fill="none" stroke="#000" stroke-width="1"/><path d="M114.5 86 L114.5 76.5 L133.5 76.5 L133.5 86" fill="none" stroke="#000" stroke-width="1"/><path d="M133.5 86 L133.5 70.5 L152.5 70.5 L152.5 86" fill="none" stroke="#000" stroke-width="1"/><path d="M152.5 86 L152.5 79.5 L171.5 79.5 L171.5 86" fill="none" stroke="#000" stroke-width="1"/><path d="M171.5 86 L171.5 79.5 L190.5 79.5 L190.5 86" fill="none" stroke="#000" stroke-width="1"/></svg></div><span class="a pl" style="right:200px;top:21px">46</span><span class="a pl" style="right:200px;top:91px">-0.01</span><span class="a pl" style="left:30px;top:105px">0</span><span class="a pl" style="right:10px;top:105px">1</span><span class="a pl rot" style="left:21px;top:62px;">frequency</span></div>
<div class="w" style="left:1008px;top:293px;width:229px;height:120px;background:rgb(224,224,180);box-shadow:inset 1px 1px 0 rgb(255,255,255),inset -1px -1px 0 rgb(109,109,87),inset 2px 2px 0 rgb(255,255,255),inset -2px -2px 0 rgb(156,156,125);"><span class="a pt" style="left:31px;top:3px;width:191px">farming independence</span><div class="a" style="left:31px;top:17px;width:191px;height:86px;background:#fff"><svg class="a" style="left:0;top:0" width="191" height="86" viewBox="0 0 191 86"><path d="M0.5 86 L0.5 84.5 L19.5 84.5 L19.5 86" fill="none" stroke="#000" stroke-width="1"/><path d="M19.5 86 L19.5 84.5 L38.5 84.5 L38.5 86" fill="none" stroke="#000" stroke-width="1"/><path d="M38.5 86 L38.5 82.5 L57.5 82.5 L57.5 86" fill="none" stroke="#000" stroke-width="1"/><path d="M57.5 86 L57.5 79.5 L76.5 79.5 L76.5 86" fill="none" stroke="#000" stroke-width="1"/><path d="M76.5 86 L76.5 77.5 L95.5 77.5 L95.5 86" fill="none" stroke="#000" stroke-width="1"/><path d="M95.5 86 L95.5 72.5 L114.5 72.5 L114.5 86" fill="none" stroke="#000" stroke-width="1"/><path d="M114.5 86 L114.5 71.5 L133.5 71.5 L133.5 86" fill="none" stroke="#000" stroke-width="1"/><path d="M133.5 86 L133.5 73.5 L152.5 73.5 L152.5 86" fill="none" stroke="#000" stroke-width="1"/><path d="M152.5 86 L152.5 72.5 L171.5 72.5 L171.5 86" fill="none" stroke="#000" stroke-width="1"/><path d="M171.5 86 L171.5 72.5 L190.5 72.5 L190.5 86" fill="none" stroke="#000" stroke-width="1"/></svg></div><span class="a pl" style="right:200px;top:21px">1954</span><span class="a pl" style="right:200px;top:91px">-0.01</span><span class="a pl" style="left:30px;top:105px">0</span><span class="a pl" style="right:10px;top:105px">1</span><span class="a pl rot" style="left:21px;top:62px;">frequency</span></div>
<div class="w" style="left:926px;top:206px;width:79px;height:37px;background:rgb(224,224,180);box-shadow:inset 1px 1px 0 rgb(255,255,255),inset -1px -1px 0 rgb(109,109,87),inset 2px 2px 0 rgb(255,255,255),inset -2px -2px 0 rgb(156,156,125);"><span class="a ml" style="left:4px;top:3px;letter-spacing:0px">Index of selection</span><div class="a" style="left:4px;top:14px;width:67px;height:16px;background:#fff"></div><span class="a mv" style="left:9px;top:17px">2.35</span></div>
<div class="w" style="left:924px;top:334px;width:79px;height:37px;background:rgb(224,224,180);box-shadow:inset 1px 1px 0 rgb(255,255,255),inset -1px -1px 0 rgb(109,109,87),inset 2px 2px 0 rgb(255,255,255),inset -2px -2px 0 rgb(156,156,125);"><span class="a ml" style="left:4px;top:3px;letter-spacing:0px">Index of selection</span><div class="a" style="left:4px;top:14px;width:67px;height:16px;background:#fff"></div><span class="a mv" style="left:9px;top:17px">2.52</span></div>
<div class="w" style="left:1237px;top:208px;width:82px;height:37px;background:rgb(224,224,180);box-shadow:inset 1px 1px 0 rgb(255,255,255),inset -1px -1px 0 rgb(109,109,87),inset 2px 2px 0 rgb(255,255,255),inset -2px -2px 0 rgb(156,156,125);"><span class="a ml" style="left:4px;top:3px;letter-spacing:0px">Index of selection</span><div class="a" style="left:4px;top:14px;width:70px;height:16px;background:#fff"></div><span class="a mv" style="left:9px;top:17px">2.39</span></div>
<div class="w" style="left:1237px;top:331px;width:83px;height:37px;background:rgb(224,224,180);box-shadow:inset 1px 1px 0 rgb(255,255,255),inset -1px -1px 0 rgb(109,109,87),inset 2px 2px 0 rgb(255,255,255),inset -2px -2px 0 rgb(156,156,125);"><span class="a ml" style="left:4px;top:3px;letter-spacing:0px">Index of selection</span><div class="a" style="left:4px;top:14px;width:71px;height:16px;background:#fff"></div><span class="a mv" style="left:9px;top:17px">3.13</span></div>
<div class="w" style="left:749px;top:434px;width:92px;height:37px;background:rgb(224,224,180);box-shadow:inset 1px 1px 0 rgb(255,255,255),inset -1px -1px 0 rgb(109,109,87),inset 2px 2px 0 rgb(255,255,255),inset -2px -2px 0 rgb(156,156,125);"><span class="a ml" style="left:4px;top:3px;letter-spacing:0px">farming_growth</span><div class="a" style="left:4px;top:14px;width:80px;height:16px;background:#fff"></div><span class="a mv" style="left:9px;top:17px">83</span></div>
<div class="w" style="left:845px;top:434px;width:91px;height:37px;background:rgb(224,224,180);box-shadow:inset 1px 1px 0 rgb(255,255,255),inset -1px -1px 0 rgb(109,109,87),inset 2px 2px 0 rgb(255,255,255),inset -2px -2px 0 rgb(156,156,125);"><span class="a ml" style="left:4px;top:3px;letter-spacing:-0.1px">farming_deterrence</span><div class="a" style="left:4px;top:14px;width:79px;height:16px;background:#fff"></div><span class="a mv" style="left:9px;top:17px">81</span></div>
<div class="w" style="left:939px;top:434px;width:90px;height:37px;background:rgb(224,224,180);box-shadow:inset 1px 1px 0 rgb(255,255,255),inset -1px -1px 0 rgb(109,109,87),inset 2px 2px 0 rgb(255,255,255),inset -2px -2px 0 rgb(156,156,125);"><span class="a ml" style="left:4px;top:3px;letter-spacing:0px">farming_balance</span><div class="a" style="left:4px;top:14px;width:78px;height:16px;background:#fff"></div><span class="a mv" style="left:9px;top:17px">2</span></div>
<div class="w" style="left:749px;top:473px;width:92px;height:37px;background:rgb(224,224,180);box-shadow:inset 1px 1px 0 rgb(255,255,255),inset -1px -1px 0 rgb(109,109,87),inset 2px 2px 0 rgb(255,255,255),inset -2px -2px 0 rgb(156,156,125);"><span class="a ml" style="left:4px;top:3px;letter-spacing:0px">herding_growth</span><div class="a" style="left:4px;top:14px;width:80px;height:16px;background:#fff"></div><span class="a mv" style="left:9px;top:17px">197</span></div>
<div class="w" style="left:846px;top:473px;width:90px;height:37px;background:rgb(224,224,180);box-shadow:inset 1px 1px 0 rgb(255,255,255),inset -1px -1px 0 rgb(109,109,87),inset 2px 2px 0 rgb(255,255,255),inset -2px -2px 0 rgb(156,156,125);"><span class="a ml" style="left:4px;top:3px;letter-spacing:-0.1px">herding_deterrence</span><div class="a" style="left:4px;top:14px;width:78px;height:16px;background:#fff"></div><span class="a mv" style="left:9px;top:17px">199</span></div>
<div class="w" style="left:939px;top:473px;width:90px;height:37px;background:rgb(224,224,180);box-shadow:inset 1px 1px 0 rgb(255,255,255),inset -1px -1px 0 rgb(109,109,87),inset 2px 2px 0 rgb(255,255,255),inset -2px -2px 0 rgb(156,156,125);"><span class="a ml" style="left:4px;top:3px;letter-spacing:0px">herding_balance</span><div class="a" style="left:4px;top:14px;width:78px;height:16px;background:#fff"></div><span class="a mv" style="left:9px;top:17px">-2</span></div>
</div>
</body></html>
